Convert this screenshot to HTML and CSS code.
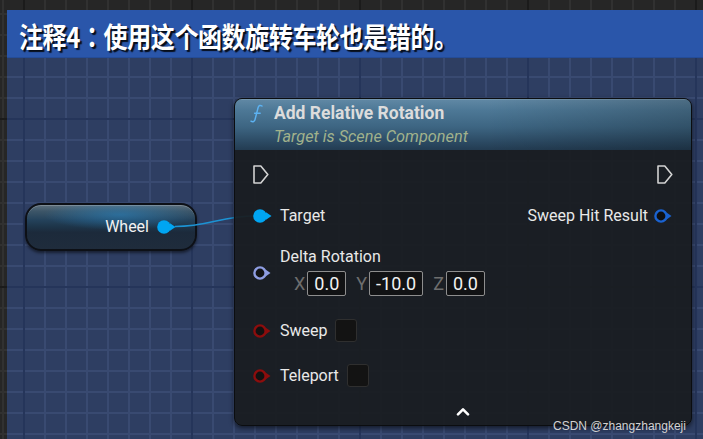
FILE: index.html
```html
<!DOCTYPE html>
<html>
<head>
<meta charset="utf-8">
<link rel="stylesheet" href="styles.css">
</head>
<body>
<div class="graph">
  <div class="comment">
    <div class="comment-title"><span class="comment-text">注释4<span class="punct">：</span>使用这个函数旋转车轮也是错的。</span></div>
  </div>

  <div class="var-node">
    <span class="var-name">Wheel</span>
    <svg class="pin" width="19" height="14" viewBox="0 0 19 14"><circle cx="7" cy="7" r="6.8" fill="#00a5f2"/><path d="M13 3.2 L18.5 7 L13 10.8 Z" fill="#00a5f2"/></svg>
  </div>

  <svg class="wire" width="703" height="439" viewBox="0 0 703 439"><path d="M175 226.5 C 210 226.5, 220 216, 256 216" fill="none" stroke="#1c93d4" stroke-width="1.6"/></svg>

  <div class="func-node">
    <div class="func-header">
      <svg class="fn-icon" width="13" height="19" viewBox="0 0 13 19"><path d="M12 2 C10.5 0.9 8.6 1.4 8.1 3.6 L5 15.6 C4.5 17.6 2.8 18.2 1 17.2" fill="none" stroke="#5cb2f2" stroke-width="1.5" stroke-linecap="round"/><path d="M4.6 9.3 H10.2" stroke="#5cb2f2" stroke-width="1.4" stroke-linecap="round"/></svg>
      <div class="titles">
        <div class="fn-title">Add Relative Rotation</div>
        <div class="fn-sub">Target is Scene Component</div>
      </div>
    </div>
    <div class="func-body">
      <div class="pins">
        <div class="inputs">
          <div class="row exec-row">
            <svg width="16" height="19" viewBox="0 0 16 19"><path d="M1 1 H7.8 L14.8 9.5 L7.8 18 H1 Z" fill="none" stroke="#d2d2d2" stroke-width="1.6" stroke-linejoin="round"/></svg>
          </div>
          <div class="row data-row">
            <svg class="pin" width="19" height="14" viewBox="0 0 19 14"><circle cx="7" cy="7" r="6.8" fill="#00a5f2"/><path d="M13 3.2 L18.5 7 L13 10.8 Z" fill="#00a5f2"/></svg>
            <span class="label">Target</span>
          </div>
          <div class="row delta-row">
            <svg class="pin" width="19" height="14" viewBox="0 0 19 14"><path d="M12.5 3.6 L17.5 7 L12.5 10.4 Z" fill="#8e9de2"/><circle cx="7" cy="7" r="5.6" fill="#121316" stroke="#8e9de2" stroke-width="2.4"/></svg>
            <div class="delta-fields">
              <span class="label">Delta Rotation</span>
              <div class="vec">
                <span class="axis">X</span><span class="vbox">0.0</span>
                <span class="axis">Y</span><span class="vbox">-10.0</span>
                <span class="axis">Z</span><span class="vbox">0.0</span>
              </div>
            </div>
          </div>
          <div class="row bool-row">
            <svg class="pin" width="19" height="14" viewBox="0 0 19 14"><path d="M12.5 3.6 L17.5 7 L12.5 10.4 Z" fill="#8c0d0d"/><circle cx="7" cy="7" r="5.6" fill="#121212" stroke="#8c0d0d" stroke-width="2.4"/></svg>
            <span class="label">Sweep</span>
            <span class="check"></span>
          </div>
          <div class="row bool-row">
            <svg class="pin" width="19" height="14" viewBox="0 0 19 14"><path d="M12.5 3.6 L17.5 7 L12.5 10.4 Z" fill="#8c0d0d"/><circle cx="7" cy="7" r="5.6" fill="#121212" stroke="#8c0d0d" stroke-width="2.4"/></svg>
            <span class="label">Teleport</span>
            <span class="check"></span>
          </div>
        </div>
        <div class="outputs">
          <div class="row exec-row">
            <svg width="16" height="19" viewBox="0 0 16 19"><path d="M1 1 H7.8 L14.8 9.5 L7.8 18 H1 Z" fill="none" stroke="#d2d2d2" stroke-width="1.6" stroke-linejoin="round"/></svg>
          </div>
          <div class="row data-row out-row">
            <span class="label">Sweep Hit Result</span>
            <svg class="pin" width="19" height="14" viewBox="0 0 19 14"><path d="M12.5 3.6 L17.5 7 L12.5 10.4 Z" fill="#1a62d0"/><circle cx="7" cy="7" r="5.6" fill="#0e0f12" stroke="#1a62d0" stroke-width="2.4"/></svg>
          </div>
        </div>
      </div>
      <div class="advanced">
        <svg width="14" height="9" viewBox="0 0 14 9"><path d="M2 7.3 L7 2.3 L12 7.3" fill="none" stroke="#ffffff" stroke-width="2.6" stroke-linecap="round" stroke-linejoin="round"/></svg>
      </div>
    </div>
  </div>

  <div class="watermark">CSDN @zhangzhangkeji</div>
</div>
</body>
</html>
```

FILE: styles.css
```css
* { box-sizing: border-box; }
html, body { margin: 0; padding: 0; }
body {
  width: 703px;
  height: 439px;
  overflow: hidden;
  font-family: Roboto, "Noto Sans", sans-serif;
  background-color: #262626;
  background-image:
    linear-gradient(90deg, #1b1b1b 2px, transparent 2px),
    linear-gradient(180deg, #1b1b1b 2px, transparent 2px),
    linear-gradient(90deg, #313131 2px, transparent 2px),
    linear-gradient(180deg, #313131 2px, transparent 2px);
  background-size: 168px 168px, 168px 168px, 21px 21px, 21px 21px;
  background-position: 23px 0, 0 118px, 2px 0, 0 13px;
}

.graph {
  position: relative;
  width: 703px;
  height: 439px;
}

/* comment box (canvas item) */
.comment {
  position: absolute;
  left: 7px;
  top: 10px;
  right: 0;
  bottom: 0;
  background-color: #2e3e62;
  background-image:
    linear-gradient(90deg, #25355a 2px, transparent 2px),
    linear-gradient(180deg, #25355a 2px, transparent 2px),
    linear-gradient(90deg, #394a71 2px, transparent 2px),
    linear-gradient(180deg, #394a71 2px, transparent 2px);
  background-size: 168px 168px, 168px 168px, 21px 21px, 21px 21px;
  background-position: 23px 0, 0 118px, 2px 0, 0 13px;
  background-attachment: fixed;
}
.comment-title {
  height: 48px;
  background: #2a56aa;
  border-bottom: 1px solid #244c98;
  display: flex;
  align-items: center;
  padding: 5px 0 0 12px;
}
.comment-text {
  display: inline-block;
  color: #ffffff;
  font-family: "Noto Sans CJK SC", sans-serif;
  font-size: 24px;
  line-height: 28px;
  font-weight: 700;
  letter-spacing: -0.4px;
  transform: scaleY(1.16);
  transform-origin: 50% 50%;
  text-shadow: 2px 2px 1px rgba(0, 0, 0, 0.85);
}
.punct {
  font-family: "Noto Sans CJK JP", "Noto Sans CJK SC", sans-serif;
}

/* variable node */
.var-node {
  position: absolute;
  left: 25px;
  top: 203px;
  width: 172px;
  height: 48px;
  border: 2px solid #0d1016;
  border-radius: 16px;
  display: flex;
  align-items: center;
  justify-content: flex-end;
  gap: 8px;
  padding-right: 19px;
  background:
    radial-gradient(ellipse 45% 35% at 55% 22%, rgba(40, 130, 190, 0.6), rgba(40, 130, 190, 0) 100%),
    linear-gradient(180deg, #5f707d 0%, #3d5668 14%, #24425b 34%, #1d3448 50%, #1c2a3b 62%, #1f2c3c 100%);
  box-shadow: 0 2px 3px rgba(0, 0, 0, 0.5), inset 0 1px 0 rgba(255, 255, 255, 0.2);
}
.var-name {
  color: #f2f2f2;
  font-size: 16px;
  line-height: 20px;
}
.pin { display: block; flex: none; }

.wire {
  position: absolute;
  left: 0;
  top: 0;
  pointer-events: none;
}

/* function node */
.func-node {
  position: absolute;
  left: 234px;
  top: 98px;
  width: 458px;
  border: 1px solid #0b0d10;
  border-radius: 8px;
  overflow: hidden;
  background: rgba(26, 29, 32, 0.94);
  box-shadow: 0 2px 5px rgba(0, 0, 0, 0.6);
}
.func-header {
  height: 51px;
  display: flex;
  align-items: flex-start;
  padding: 4px 0 0 15px;
  background:
    linear-gradient(90deg, rgba(0, 0, 0, 0) 55%, rgba(0, 0, 0, 0.2) 100%),
    linear-gradient(180deg, #6189a5 0%, #4d7896 22%, #3d6582 55%, #2b4962 85%, #233c52 100%);
  box-shadow: inset 0 1px 0 rgba(255, 255, 255, 0.12);
}
.fn-icon {
  flex: none;
  margin: 1px 11px 0 0;
}
.titles {
  display: flex;
  flex-direction: column;
  gap: 4px;
}
.fn-title {
  color: #dcdcdc;
  font-size: 17.5px;
  font-weight: 700;
  line-height: 20px;
}
.fn-sub {
  color: #a1b28c;
  font-size: 16.3px;
  font-style: italic;
  line-height: 20px;
}

.func-body {
  padding: 16px 18px 9px 18px;
}
.pins {
  display: flex;
  justify-content: space-between;
}
.inputs, .outputs {
  display: flex;
  flex-direction: column;
  gap: 22px;
}
.outputs { align-items: flex-end; }
.row {
  display: flex;
  align-items: center;
  gap: 8px;
}
.exec-row { height: 18px; }
.exec-row svg { display: block; margin-top: -1px; }
.data-row { height: 20px; }
.out-row { gap: 6px; }
.bool-row { height: 23px; }
.delta-row { height: 49px; }

.label {
  color: #e9e9e9;
  font-size: 16px;
  line-height: 18px;
  white-space: nowrap;
}
.delta-fields {
  display: flex;
  flex-direction: column;
  gap: 5px;
  margin-top: -2px;
}
.vec {
  display: flex;
  align-items: center;
  margin-left: 14px;
  height: 25px;
}
.axis {
  color: #6e6e6e;
  font-size: 18px;
  margin-right: 2px;
}
.vbox {
  height: 25px;
  display: flex;
  align-items: center;
  padding: 0 6px;
  border: 1.5px solid #8e8e8e;
  border-radius: 2px;
  background: #111214;
  color: #f2f2f2;
  font-size: 18px;
  margin-right: 10px;
}
.check {
  width: 22px;
  height: 23px;
  background: #131313;
  border: 1px solid #2f2f2f;
  border-radius: 3px;
}

.advanced {
  margin-top: 21px;
  height: 8px;
  display: flex;
  justify-content: center;
}
.advanced svg { display: block; margin-top: -1px; }

.watermark {
  position: absolute;
  left: 553px;
  top: 419px;
  font-family: "Liberation Sans", sans-serif;
  font-size: 12px;
  line-height: 14px;
  color: #d2d2d2;
}
```
